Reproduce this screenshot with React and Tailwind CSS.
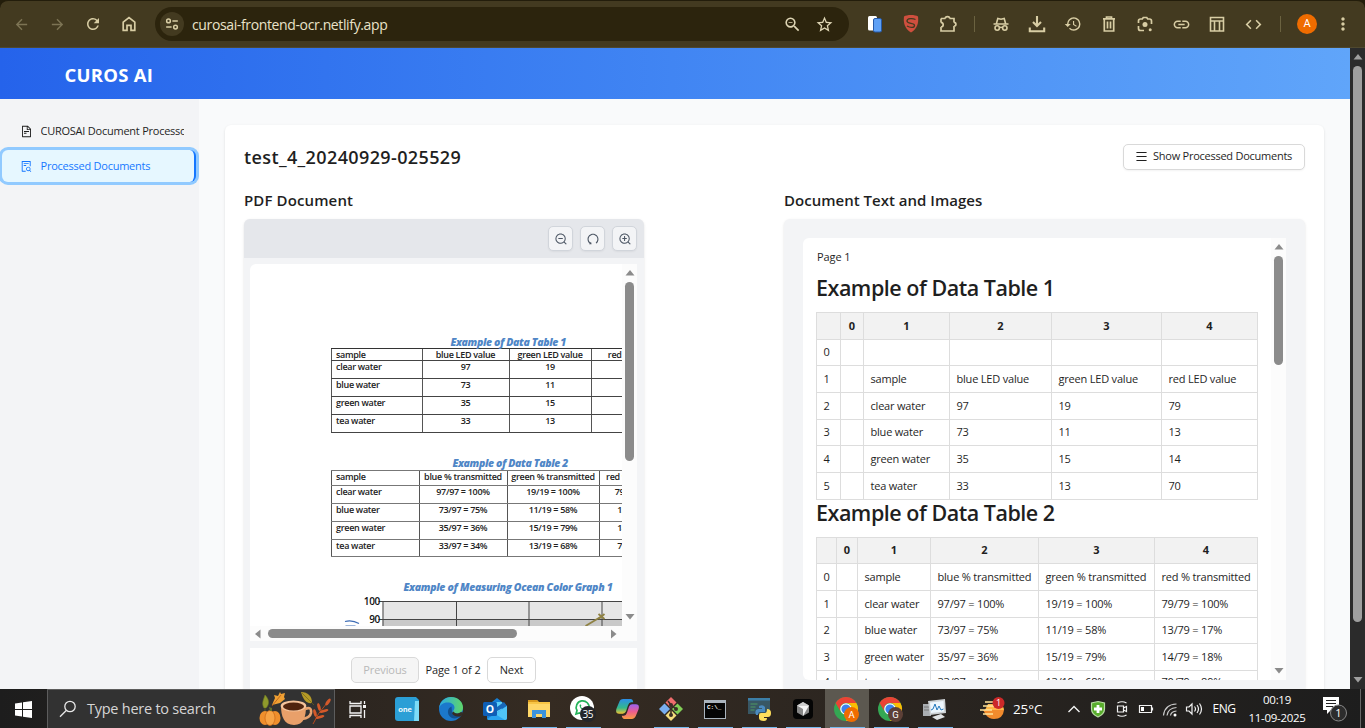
import React from "react";
import {
  MdArrowBack, MdArrowForward, MdRefresh, MdStarBorder, MdOutlineZoomOut,
  MdHistory, MdLink, MdCode, MdMoreVert,
} from "react-icons/md";
import {
  AiOutlineFileText, AiOutlineFileSearch, AiOutlineZoomOut, AiOutlineZoomIn, AiOutlineUndo, AiOutlineMenu,
} from "react-icons/ai";

function Cell({ children }) {
  return <div className="flex h-full w-9 shrink-0 items-center justify-center">{children}</div>;
}

function Divider() {
  return (
    <div className="flex w-[18px] shrink-0 items-center justify-center">
      <div className="h-4 w-px bg-[#6b6240]" />
    </div>
  );
}

function Line({ children, size = 18, w = 1.7 }) {
  return (
    <svg width={size} height={size} viewBox="0 0 18 18" fill="none" stroke="currentColor" strokeWidth={w}>
      {children}
    </svg>
  );
}

function BrowserBar() {
  return (
    <div className="h-12 shrink-0 bg-[#231d0b]">
      <div className="mt-0 flex h-12 items-center rounded-t-lg border-t border-[#231d0b] border-b border-b-[#4f482f] bg-[#433a20] pl-[3px] text-[#d8cda4]">
        <Cell><MdArrowBack size={17} className="text-[#7d7454]" /></Cell>
        <Cell><MdArrowForward size={17} className="text-[#7d7454]" /></Cell>
        <Cell><MdRefresh size={18} /></Cell>
        <Cell>
          <Line size={18}><path d="M3.200 7.200 9 2.600l5.800 4.600V15.400h-3.800V10.400H7v5H3.200z" /></Line>
        </Cell>
        <div className="ml-2 flex h-[34px] w-[694px] shrink-0 items-center rounded-full bg-[#2c240d] pr-[15px] pl-[5px]">
          <div className="flex size-6 items-center justify-center rounded-full bg-[#433a20]">
            <Line size={14} w={1.900}>
              <circle cx="4.500" cy="5" r="2.400" /><path d="M9.500 5H16.500M1.500 13h7" /><circle cx="13.500" cy="13" r="2.400" />
            </Line>
          </div>
          <span className="ml-2 grow font-['Open_Sans','Noto_Sans',sans-serif] text-[14px] tracking-[-0.37px] text-[#e9e2c8]">curosai-frontend-ocr.netlify.app</span>
          <MdOutlineZoomOut size={19} className="mr-[13px] text-[#ded5b4]" />
          <MdStarBorder size={19} className="text-[#ded5b4]" />
        </div>
        <div className="w-2 shrink-0" />
        <Cell>
          <svg width="16" height="18" viewBox="0 0 16 18">
            <rect x="1" y="1" width="9" height="14.500" rx="1.500" fill="#fff" />
            <rect x="6.500" y="3.500" width="8" height="13.500" rx="1.500" fill="#5ea0f5" stroke="#2559a8" />
          </svg>
        </Cell>
        <Cell>
          <svg width="18" height="18" viewBox="0 0 18 18">
            <path d="M9 0c3 0 5.500.5 7 1.500.8 6-.5 12-7 16C2.500 13.500 1.200 7.500 2 1.500 3.500.5 6 0 9 0z" fill="#cf4f3e" />
            <path d="M13.500 4.500c-3-1.400-8.500-1.200-8.500 1.600 0 3.100 7.500 1.600 7.500 4.300 0 2.600-4.500 2.400-7.500.6" fill="none" stroke="#433a20" strokeWidth="1.300" />
          </svg>
        </Cell>
        <Cell>
          <div className="pl-0.5">
            <Line size={18}><path d="M2 3.500h4.500M10.500 3.500H15v4M15 11v5H2v-4M2 7.500v-4M6.300 3.600q0-2 2.200-2t2.200 2M14.900 7.300q2 0 2 1.900t-2 1.900M1.900 7.400q2.300.3 2.300 2.300T1.900 12" /></Line>
          </div>
        </Cell>
        <Divider />
        <Cell>
          <Line size={18} w={1.600}>
            <path d="M1.500 9h15M4.300 9l1.500-5.500 3.200.8 3.200-.8L13.700 9" /><circle cx="5.200" cy="13" r="2.200" /><circle cx="12.800" cy="13" r="2.200" /><path d="M7.400 12.600q1.600-.8 3.200 0" />
          </Line>
        </Cell>
        <Cell><Line size={18} w={2.100}><path d="M9 1v9.500M5 7l4 4 4-4M1.800 12.500v3.700h14.400v-3.700" /></Line></Cell>
        <Cell><MdHistory size={18} /></Cell>
        <Cell><Line size={18} w={1.700}><path d="M3 3.800h12M6.500 3.500V2h5v1.500M4.300 4v12h9.400V4M7.500 6.500v7M10.500 6.500v7" /></Line></Cell>
        <Cell>
          <Line size={18} w={1.700}>
            <path d="M2.500 8V6q0-2 2-2h1.800l1-1.500h3.400l1 1.500h1.800q2 0 2 2v3M2.500 11v2.500q0 2 2 2H8" />
            <circle cx="9" cy="9.500" r="2.500" fill="currentColor" stroke="none" /><circle cx="14.200" cy="14.800" r="1.500" fill="currentColor" stroke="none" />
          </Line>
        </Cell>
        <Cell><MdLink size={19} /></Cell>
        <Cell><Line size={18} w={1.600}><path d="M2.500 2.500h13v13.500h-13zM2.500 6h13M6.500 6v10M11.500 6v10" /></Line></Cell>
        <Cell><MdCode size={19} /></Cell>
        <Divider />
        <Cell>
          <div className="flex size-5 items-center justify-center rounded-full bg-[#ef6c00] font-['Roboto',sans-serif] text-[11px] text-white">A</div>
        </Cell>
        <Cell><MdMoreVert size={20} /></Cell>
      </div>
    </div>
  );
}

function Sidebar() {
  return (
    <aside className="w-[199px] shrink-0 bg-[#f3f4f6] pt-[16px] text-[11px] text-[#1f1f1f]">
      <div className="flex h-8 items-center pl-5">
        <AiOutlineFileText size={13} className="shrink-0" />
        <span className="ml-[7.500px] w-[143px] overflow-hidden tracking-[-0.24px] whitespace-nowrap">CUROSAI Document Processor</span>
      </div>
      <div className="mt-[3px] mr-[3px] ml-[2px] flex h-8 items-center rounded-md border-r-2 border-[#1677ff] bg-[#e6f7ff] pl-[18px] text-[#1677ff] ring-3 ring-[#91caff]">
        <AiOutlineFileSearch size={13} className="shrink-0" />
        <span className="ml-[7.500px] tracking-[-0.24px]">Processed Documents</span>
      </div>
    </aside>
  );
}

function Arrow({ d, light }) {
  return (
    <svg width="10" height="6" viewBox="0 0 10 6" className={light ? "fill-[#9f9f9f]" : "fill-[#8b8b8b]"}>
      <path d={d === "up" ? "M5 0 9.500 5.500H.5z" : "M5 5.500.5 0h9z"} />
    </svg>
  );
}

function PdfRow({ cells, cols, h, dark, last }) {
  const line = dark ? "border-[#444]" : "border-[#777]";
  return (
    <div className={`grid ${cols} ${h} border-b ${line}`}>
      {cells.map((c, i) => (
        <div key={i} className={`overflow-hidden border-l border-[#555] leading-[11px] whitespace-nowrap ${i === 0 ? "pl-[4.500px]" : i === 3 ? "" : "text-center"}`}>
          {i === 3 ? <div className={`${last} text-center`}>{c}</div> : c}
        </div>
      ))}
    </div>
  );
}

function PdfPage() {
  const a = "grid-cols-[91px_87px_82px_100px]";
  const b = "grid-cols-[88px_88px_92px_100px]";
  const title = "text-[10.500px] font-extrabold whitespace-nowrap text-[#4f86c6] italic";
  return (
    <div className="h-[362px] w-[372px] overflow-hidden pt-[72px] pl-[80.500px] text-[9px] font-semibold tracking-[-0.3px] text-[#222]">
      <div className={`flex h-[12px] items-center pt-0.5 pl-[120px] tracking-[-0.38px] ${title}`}>Example of Data Table 1</div>
      <div className="w-[360px] border-t border-[#333]">
        <PdfRow dark cols={a} last="w-[88px]" h="h-[12px]" cells={["sample", "blue LED value", "green LED value", "red LED value"]} />
        <PdfRow dark cols={a} last="w-[88px]" h="h-[18px]" cells={["clear water", "97", "19", ""]} />
        <PdfRow dark cols={a} last="w-[88px]" h="h-[18px]" cells={["blue water", "73", "11", ""]} />
        <PdfRow dark cols={a} last="w-[88px]" h="h-[18px]" cells={["green water", "35", "15", ""]} />
        <PdfRow dark cols={a} last="w-[88px]" h="h-[18px]" cells={["tea water", "33", "13", ""]} />
      </div>
      <div className={`mt-[25px] flex h-[12px] items-center pl-[122px] tracking-[-0.38px] ${title}`}>Example of Data Table 2</div>
      <div className="w-[368px] border-t border-[#777]">
        <PdfRow cols={b} last="w-[87px]" h="h-[15px]" cells={["sample", "blue % transmitted", "green % transmitted", "red % transmitted"]} />
        <PdfRow cols={b} last="w-[84px]" h="h-[18px]" cells={["clear water", "97/97 = 100%", "19/19 = 100%", "79/79 = 100%"]} />
        <PdfRow cols={b} last="w-[84px]" h="h-[18px]" cells={["blue water", "73/97 = 75%", "11/19 = 58%", "13/79 = 17%"]} />
        <PdfRow cols={b} last="w-[84px]" h="h-[18px]" cells={["green water", "35/97 = 36%", "15/19 = 79%", "14/79 = 18%"]} />
        <PdfRow cols={b} last="w-[84px]" h="h-[17px]" cells={["tea water", "33/97 = 34%", "13/19 = 68%", "70/79 = 89%"]} />
      </div>
      <div className={`mt-[24px] flex h-[13px] items-center pl-[73px] tracking-[-0.32px] ${title}`}>Example of Measuring Ocean Color Graph 1</div>
      <svg width="292" height="32" viewBox="330.5 594 292 32" className="font-['Open_Sans',sans-serif]">
        <rect x="382" y="601" width="241" height="18" fill="#e6e6e6" />
        <rect x="382" y="619" width="241" height="8" fill="#c9c9c9" />
        <path d="M378 601.500h245M378 619.500h245M382.500 601v26M456 601v26M528.500 601v26M601.500 601v26" stroke="#444" fill="none" />
        <path d="m585 626 15-9" stroke="#8f8243" strokeWidth="1.800" />
        <path d="m598 614 6 5m0-5-6 5" stroke="#8f8243" strokeWidth="1.800" />
        <path d="M344.500 621.500q7-2 14 2M345 626h10" stroke="#3d6cb5" strokeWidth="1.200" fill="none" />
        <text x="379.500" y="605" textAnchor="end" fontSize="10" fill="#111">100</text>
        <text x="379.500" y="623" textAnchor="end" fontSize="10" fill="#111">90</text>
      </svg>
    </div>
  );
}

function ToolButton({ children }) {
  return <div className="flex size-[25px] items-center justify-center rounded-[5px] border border-[#d1d5db] bg-[#f3f4f6] text-[#4b5563] shadow-xs">{children}</div>;
}

function PdfPanel() {
  return (
    <section className="flex w-[400px] flex-col">
      <h3 className="h-[29px] text-[15px] leading-5 font-semibold tracking-[0.12px]">PDF Document</h3>
      <div className="flex grow flex-col overflow-hidden rounded-t-md bg-[#f3f4f6] shadow-sm">
        <div className="flex h-[39px] shrink-0 items-center justify-end gap-[7px] bg-[#e5e7eb] pr-[7px]">
          <ToolButton><AiOutlineZoomOut size={14} /></ToolButton>
          <ToolButton><AiOutlineUndo size={14} /></ToolButton>
          <ToolButton><AiOutlineZoomIn size={14} /></ToolButton>
        </div>
        <div className="mx-[6px] mt-[6px] w-[387px] shrink-0 overflow-hidden rounded-tl-md bg-white">
          <div className="flex">
            <PdfPage />
            <div className="flex w-[15px] flex-col items-center bg-[#fcfcfc] pt-[6px] pb-[6px]">
              <Arrow d="up" />
              <div className="mt-[6px] h-[179px] w-[9px] rounded-full bg-[#8b8b8b]" />
              <div className="grow" />
              <Arrow d="down" />
            </div>
          </div>
          <div className="flex h-[15px] items-center bg-[#fcfcfc] pl-[5px]">
            <svg width="6" height="10" viewBox="0 0 6 10" className="fill-[#8b8b8b]"><path d="M0 5 5.500.5v9z" /></svg>
            <div className="ml-[7px] h-[9px] w-[249px] rounded-full bg-[#8b8b8b]" />
            <div className="w-[94px]" />
            <svg width="6" height="10" viewBox="0 0 6 10" className="fill-[#8b8b8b]"><path d="M5.500 5 0 .5v9z" /></svg>
          </div>
        </div>
        <div className="mx-[6px] mt-[7px] flex w-[387px] grow items-start bg-white pt-[9px] pl-[101px] text-[11px]">
          <div className="flex h-[26px] w-[68px] items-center justify-center rounded-[5px] border border-[#d9d9d9] bg-[#f5f5f5] tracking-[-0.1px] text-[#b8b8b8]">Previous</div>
          <div className="flex h-[26px] w-[68px] items-center justify-center tracking-[-0.1px] whitespace-nowrap">Page 1 of 2</div>
          <div className="flex h-[26px] w-[49px] items-center justify-center rounded-[5px] border border-[#d9d9d9] tracking-[-0.1px]">Next</div>
        </div>
      </div>
    </section>
  );
}

function DataTable({ cols, rows, heights }) {
  return (
    <div className="w-[442px] border-t border-l border-[#ddd]">
      {rows.map((r, i) => (
        <div key={i} className={`grid ${cols} ${heights[i]}`}>
          {r.map((c, j) => (
            <div
              key={j}
              className={`flex items-center border-r border-b border-[#ddd] whitespace-nowrap ${i === 0 ? "justify-center bg-[#f2f2f2] font-bold" : "pl-[6.500px] tracking-[-0.2px]"}`}
            >
              {c}
            </div>
          ))}
        </div>
      ))}
    </div>
  );
}

const A = "h-[26px]";
const B = "h-[27px]";
const C = "h-[23px]";
const table1 = [
  ["", "0", "1", "2", "3", "4"],
  ["0", "", "", "", "", ""],
  ["1", "", "sample", "blue LED value", "green LED value", "red LED value"],
  ["2", "", "clear water", "97", "19", "79"],
  ["3", "", "blue water", "73", "11", "13"],
  ["4", "", "green water", "35", "15", "14"],
  ["5", "", "tea water", "33", "13", "70"],
];
const table2 = [
  ["", "0", "1", "2", "3", "4"],
  ["0", "", "sample", "blue % transmitted", "green % transmitted", "red % transmitted"],
  ["1", "", "clear water", "97/97 = 100%", "19/19 = 100%", "79/79 = 100%"],
  ["2", "", "blue water", "73/97 = 75%", "11/19 = 58%", "13/79 = 17%"],
  ["3", "", "green water", "35/97 = 36%", "15/19 = 79%", "14/79 = 18%"],
  ["4", "", "tea water", "33/97 = 34%", "13/19 = 68%", "70/79 = 89%"],
];

function TextPanel() {
  return (
    <section className="flex w-[521px] flex-col">
      <h3 className="h-[29px] text-[15px] leading-5 font-semibold tracking-[0.01px]">Document Text and Images</h3>
      <div className="grow rounded-t-md bg-[#f3f4f6] pt-[19px] pl-[19px] shadow-sm">
        <div className="flex h-[442px] w-[483px] overflow-hidden rounded-l-md bg-white">
          <div className="h-[442px] grow overflow-hidden pt-[10px] pl-[13px] text-[11px]">
            <div className="h-[18px] pl-px leading-[18px] tracking-[-0.1px]">Page 1</div>
            <h1 className="mt-[7px] h-[39px] text-[21.500px] leading-[30px] font-semibold tracking-[-0.48px]">Example of Data Table 1</h1>
            <DataTable cols="grid-cols-[24px_23px_86px_102px_110px_96px]" rows={table1} heights={[B, A, B, B, A, B, B]} />
            <h1 className="h-[37px] text-[21.500px] leading-[26px] font-semibold tracking-[-0.48px]">Example of Data Table 2</h1>
            <DataTable cols="grid-cols-[20px_21px_73px_108px_116px_103px]" rows={table2} heights={[A, B, B, A, B, C]} />
          </div>
          <div className="flex w-[15px] shrink-0 flex-col items-center bg-[#fcfcfc] py-[6px]">
            <Arrow d="up" />
            <div className="mt-[6px] h-[109px] w-[9px] rounded-full bg-[#8b8b8b]" />
            <div className="grow" />
            <Arrow d="down" />
          </div>
        </div>
      </div>
    </section>
  );
}

function Page() {
  return (
    <div className="flex h-[641px] shrink-0">
      <div className="flex w-[1350px] shrink-0 flex-col font-['Open_Sans','Noto_Sans',sans-serif] text-[#1f1f1f]">
        <header className="flex h-[51px] shrink-0 items-center bg-linear-to-r from-[#2563eb] to-[#60a5fa] pt-0.5 pl-[64.500px] text-[18.500px] font-bold tracking-[0.250px] text-white">CUROS AI</header>
        <div className="flex grow overflow-hidden">
          <Sidebar />
          <main className="flex grow flex-col bg-[#f9fafb] pt-[26px] pr-[26px] pl-[26px]">
            <div className="flex grow flex-col rounded-t-md bg-white px-[19px] pt-[18px] shadow-sm">
              <div className="flex h-[27px] items-center justify-between">
                <h2 className="pt-0.5 text-[18px] font-semibold tracking-[0.38px]">test_4_20240929-025529</h2>
                <button className="flex h-[26px] w-[182px] items-center rounded-[5px] border border-[#d9d9d9] bg-white pl-[11px] text-[11px] shadow-xs">
                  <AiOutlineMenu size={13} />
                  <span className="ml-[5px] tracking-[-0.25px] whitespace-nowrap">Show Processed Documents</span>
                </button>
              </div>
              <div className="mt-[20px] flex grow justify-between">
                <PdfPanel />
                <TextPanel />
              </div>
            </div>
          </main>
        </div>
      </div>
      <div className="flex w-[15px] flex-col items-center bg-[#2b2b2b] py-[6px]">
        <Arrow d="up" light />
        <div className="mt-[6px] h-[556px] w-[9px] rounded-full bg-[#9f9f9f]" />
        <div className="grow" />
        <Arrow d="down" light />
      </div>
    </div>
  );
}

function Task({ children, open, active }) {
  return (
    <div className={`flex h-full w-11 shrink-0 flex-col items-center ${active ? "bg-[#5c5850]" : ""}`}>
      <div className="flex grow items-center pt-0.5">{children}</div>
      <div className={`h-px w-[35px] ${open ? "bg-[#76b9ed]" : ""}`} />
    </div>
  );
}

function Autumn() {
  return (
    <svg width="74" height="38" viewBox="260 690 74 38" className="ml-auto mr-px">
      <path d="M265 708c-3-5 0-9 1-13 4 4 5 9 1 13zM266 709v3" fill="#8f9a2c" stroke="#6f7a22" strokeWidth=".6" />
      <path d="m273 705 3-7-1-3 4 1 2-4 1 2 4-1-1 4 1 2-5 4-4 1z" fill="#f0a033" />
      <path d="m273 706 9-11" stroke="#b85b14" strokeWidth=".8" />
      <path d="M302 692c7 0 11 4 11 11-6 1-9-4-11-11z" fill="#b59a26" /><path d="m303 693 12 12" stroke="#71641b" strokeWidth=".7" />
      <g fill="#ef8f2c"><ellipse cx="266" cy="718" rx="5.500" ry="7" /><ellipse cx="276" cy="718" rx="5.500" ry="7" /><ellipse cx="271" cy="718" rx="5" ry="7.500" fill="#f7a344" stroke="#c96516" strokeWidth=".7" /></g>
      <path d="m271 711-1-4 3 1v3z" fill="#63702a" />
      <path d="M306 709q7-3 6 4-1 5-9 6" fill="none" stroke="#e8a36f" strokeWidth="2.600" />
      <path d="M282 706c0 10 3 19 13 19s12-9 12-19z" fill="#e9a06a" /><ellipse cx="294.500" cy="706" rx="12.800" ry="5.500" fill="#f5c39b" /><ellipse cx="294.500" cy="706.500" rx="10.500" ry="4" fill="#50240f" />
      <path d="M314 724q4-10 14-21" stroke="#b84a1e" fill="none" />
      <g fill="#d4592a"><ellipse cx="329" cy="702" rx="1.600" ry="4" transform="rotate(35 329 702)" /><ellipse cx="320" cy="707" rx="1.500" ry="4" transform="rotate(-15 320 707)" /><ellipse cx="325" cy="711" rx="1.400" ry="4.500" transform="rotate(75 325 711)" /><ellipse cx="316" cy="713" rx="1.500" ry="4" transform="rotate(-15 316 713)" /><ellipse cx="321" cy="717" rx="1.400" ry="4.500" transform="rotate(75 321 717)" /></g>
    </svg>
  );
}

function Chrome({ letter, color }) {
  return (
    <svg width="26" height="25" viewBox="0 0 26 25" className="font-['Roboto',sans-serif]">
      <circle cx="12" cy="12" r="12" fill="#34a853" />
      <path d="M1.600 6A12 12 0 0 1 22.400 6H12A6 6 0 0 0 6.800 15z" fill="#ea4335" />
      <path d="M22.400 6A12 12 0 0 1 12 24l5.200-9A6 6 0 0 0 12 6z" fill="#fbbc04" />
      <circle cx="12" cy="12" r="5.800" fill="#fff" /><circle cx="12" cy="12" r="4.600" fill="#3b82f0" />
      <circle cx="17.500" cy="17.500" r="7.500" fill={color} />
      <text x="17.500" y="21" fontSize="9.500" fill="#fff" textAnchor="middle">{letter}</text>
    </svg>
  );
}

function TrayIcon({ children }) {
  return (
    <div className="flex w-6 shrink-0 items-center justify-center">
      <svg width="18" height="18" viewBox="0 0 18 18" fill="none" stroke="#f2f2f2" strokeWidth="1.200">{children}</svg>
    </div>
  );
}

function Taskbar() {
  return (
    <div className="flex h-[39px] shrink-0 items-stretch bg-linear-to-r from-[#1d1d1d] via-[#352b22] via-40% to-[#1d1d1d] font-['Open_Sans','Noto_Sans',sans-serif] text-white">
      <div className="flex w-[47px] shrink-0 items-center justify-center pt-0.5">
        <svg width="17" height="17" viewBox="0 0 17 17" fill="#fff"><path d="m0 2.500 7-1V8H0zM8 1.300 17 0v8H8zM0 9h7v6.500l-7-1zM8 9h9v8l-9-1.300z" /></svg>
      </div>
      <div className="flex w-[288px] shrink-0 items-center border border-b-0 border-[#5d5d5d] bg-[#323232] pl-[11px]">
        <svg width="18" height="18" viewBox="0 0 18 18" fill="none" stroke="#e8e8e8" strokeWidth="1.300"><circle cx="11" cy="6.500" r="5.200" /><path d="M7.200 10.500 1 16.800" /></svg>
        <span className="ml-[10px] text-[14.500px] tracking-[-0.25px] whitespace-nowrap text-[#d6d6d6]">Type here to search</span>
        <Autumn />
      </div>
      <div className="flex w-[50px] shrink-0 items-center justify-center pt-0.5 pr-1 pl-0">
        <svg width="18" height="17" viewBox="0 0 18 17" fill="none" stroke="#f4f4f4" strokeWidth="1.300"><path d="M1 0v2.500h11V0M1 17v-2.500h11V17M1 5h11v7H1zM15.500 0v3M15.500 9v8" /><rect x="14" y="4" width="3" height="3" fill="#f4f4f4" stroke="none" /></svg>
      </div>
      <Task>
        <svg width="24" height="24" viewBox="0 0 24 24" className="font-['Lato',sans-serif]"><path d="M3 0h18l3 3v21H3q-3 0-3-3V3q0-3 3-3z" fill="#2b9fd6" /><path d="M20 4h4v20h-5z" fill="#7cdcf7" /><text x="10" y="14.500" fontSize="8" fontWeight="bold" textAnchor="middle" fill="#fff">one</text></svg>
      </Task>
      <Task>
        <svg width="24" height="24" viewBox="0 0 24 24">
          <defs><linearGradient id="eg"><stop stopColor="#2aa9e6" /><stop offset="1" stopColor="#5fd668" /></linearGradient></defs>
          <circle cx="12" cy="12" r="12" fill="#1b78cc" />
          <path d="M0 11.500C1 4 6 0 12 0c7 0 12 5 12 10.500 0 4-3 6-6 6-2.500 0-4-1-4-2s1.500-1.500 1.500-4c0-3-3-5-7-5C4 5.500 1 8 0 11.500z" fill="url(#eg)" />
          <path d="M12.500 9.500C9 11 8 15 10 18.500c2.500 3.500 7 4 11.500.800l1-1.500C18 19.500 14 18 13 15z" fill="#12508f" />
          <path d="M14.500 14.500c1.500 2.500 5 2.500 7.500.5l2.500 1-2.500 3c-4 1.500-8 0-9-3z" fill="#352c24" />
        </svg>
      </Task>
      <Task>
        <svg width="25" height="24" viewBox="0 0 25 24" className="font-['Open_Sans',sans-serif]"><path d="m4 9 10-8 10 8v13H4z" fill="#1680d6" /><path d="M7 5h12v12H7z" fill="#5ccdf7" /><path d="m14 14 10-5-3-4-7 5z" fill="#1767b8" /><path d="m4 22 20-13v12q0 2-2 2H5z" fill="#2aa3ee" /><path d="m24 9-12 8 10 6q2 0 2-2z" fill="#50c4f6" /><rect x="0" y="5" width="14" height="14" rx="1.500" fill="#0f5eb5" /><text x="7" y="15.800" fontSize="10.500" fontWeight="bold" textAnchor="middle" fill="#fff">O</text></svg>
      </Task>
      <Task open>
        <svg width="22" height="20" viewBox="0 0 22 20"><path d="M0 1h9l2 2h11v15H0z" fill="#f8c545" /><path d="M0 1h9l1 2H0z" fill="#d99a1e" /><path d="M0 5h22v13H0z" fill="#ffd768" /><path d="M4 19v-8h14v8h-4v-4H8v4z" fill="#3d93db" /></svg>
      </Task>
      <Task open>
        <svg width="26" height="26" viewBox="0 0 26 26" className="font-['Open_Sans',sans-serif]"><circle cx="12" cy="12" r="12" fill="#fff" /><path d="m6 18 1-3.500A6.500 6.500 0 1 1 9.500 17z" fill="none" stroke="#25b35a" strokeWidth="1.700" /><path d="M9.500 9q0 4 5 5.500l1-1.500-2-1-1 .8-1.700-2 .6-1-.8-1.500z" fill="#25b35a" /><circle cx="18" cy="18" r="8" fill="#24262a" /><text x="17.700" y="21.800" fontSize="10" textAnchor="middle" fill="#fff" letterSpacing="-.6">35</text></svg>
      </Task>
      <Task>
        <svg width="23" height="22" viewBox="0 0 22 21">
          <defs><linearGradient id="ca" x2="0" y2="1"><stop stopColor="#2c8ee8" /><stop offset=".6" stopColor="#33b98b" /><stop offset="1" stopColor="#f1c232" /></linearGradient><linearGradient id="cb" x2="0" y2="1"><stop stopColor="#9b62f0" /><stop offset=".5" stopColor="#ec5c8f" /><stop offset="1" stopColor="#f99b43" /></linearGradient></defs>
          <path d="M7 1h7q2 0 2.500 3h-2q-2 0-3 3L9.500 13q-1 2-3 2H3q-4 0-2.500-5L3 4q1-3 4-3z" fill="url(#ca)" /><path d="M15 20H8q-2 0-2.500-3h2q2 0 3-3L12.500 8q1-2 3-2H19q4 0 2.500 5L19 17q-1 3-4 3z" fill="url(#cb)" />
        </svg>
      </Task>
      <Task open>
        <svg width="24" height="24" viewBox="0 0 24 24"><path d="m12 0 5.500 5.500L12 11 6.500 5.500z" fill="#ef6d6d" /><path d="m5.500 6.500L11 12l-5.500 5.500L0 12z" fill="#79aef0" /><path d="m18.500 6.500L24 12l-5.500 5.500L13 12z" fill="#82cf56" /><path d="m12 13 5.500 5.500L12 24l-5.500-5.500z" fill="#f5dc7b" /><path d="m9 4 3 4v10M12 8l5 4" stroke="#3b2d26" strokeWidth="1.600" fill="none" /><g fill="#3b2d26"><circle cx="12" cy="8" r="2" /><circle cx="17" cy="12" r="2" /><circle cx="12" cy="18" r="2" /></g></svg>
      </Task>
      <Task open>
        <svg width="22" height="19" viewBox="0 0 22 19" className="font-['Liberation_Mono',monospace]"><path d="M0 0h22v19H0z" fill="#aab4bd" /><path d="M1 3h20v15H1z" fill="#050505" /><text x="3" y="9" fontSize="6" fontWeight="bold" fill="#fff">C:\_</text></svg>
      </Task>
      <Task open>
        <svg width="23" height="23" viewBox="0 0 23 23"><path d="M0 0h22v16H0z" fill="#385764" /><path d="M0 0h22v2.500H0z" fill="#3c7fa8" /><path d="M2.500 6h7M2.500 9h5M2.500 12h4" stroke="#4f9b62" /><path d="M11 8q4-2 6 1v5h-5q-2 0-2 3H8q-2-5 2-6h4v-1h-3z" fill="#4b8bbf" /><path d="M19 11q4 0 4 4t-3 4h-4v1h3q0 3-3 3-5 0-5-3v-3q0-2 2-2h4q2 0 2-4z" fill="#ffdf5c" /></svg>
      </Task>
      <Task open>
        <svg width="20" height="20" viewBox="0 0 20 20"><rect width="20" height="20" rx="4" fill="#050505" /><path d="m10 3 6 3.500v7L10 17l-6-3.500v-7z" fill="#888" /><path d="m4 6.500 6-3.500 6 3.500z" fill="#ccc" /><path d="m4 6.500 12 0-6 10.500V10z" fill="#f4f4f4" /></svg>
      </Task>
      <Task open active><Chrome letter="A" color="#ef6c00" /></Task>
      <Task open><Chrome letter="G" color="#5d4037" /></Task>
      <Task open>
        <svg width="24" height="22" viewBox="0 0 24 22"><path d="M0 6h8v12H0z" fill="#a9adb1" /><path d="M1 9h5M1 12h5" stroke="#777" /><path d="m5 3 17-2 1 14-16 2z" fill="#cdd1d4" /><path d="m7 4.500 13.500-1.500.700 10.500L8 15z" fill="#edf6fd" /><path d="m8 12 2-1 2-5 2 6 2-4 2 4 2.500-1" stroke="#2378bd" fill="none" /><path d="m9 19 9-3 4 3-8 3z" fill="#e2e4e6" /></svg>
      </Task>
      <div className="flex w-[48px] shrink-0 items-center justify-end pr-0">
        <svg width="25" height="23" viewBox="0 0 25 23" className="font-['Open_Sans',sans-serif]"><path d="M3 13h21q-1 9-10 9-5 0-8-4z" fill="#f28b2d" /><path d="M8 7h12q4 2 4 6H5z" fill="#ffb84a" /><path d="M5 5h9M3 9h11M0 13h12M3 17h10" stroke="#ffe39a" strokeWidth="1.700" /><circle cx="18.500" cy="6" r="6" fill="#cc2929" /><text x="18.500" y="9.300" fontSize="9" textAnchor="middle" fill="#fff">1</text></svg>
      </div>
      <div className="flex w-[57px] shrink-0 items-center justify-start pt-px pl-[8px] text-[13.500px] tracking-[-0.1px]">25°C</div>
      <TrayIcon><path d="m3.500 12 5.500-5.500 5.500 5.500" strokeWidth="1.400" /></TrayIcon>
      <TrayIcon><path d="M9 1.500 15.500 3v6q0 5-6.500 8-6.500-3-6.500-8V3z" fill="#59ad2c" stroke="#b9dca4" /><path d="M9 5v8M5 9h8" stroke="#fff" strokeWidth="2.800" /></TrayIcon>
      <TrayIcon><path d="M4.500 3q4.500-2.500 9 0M4.500 15q4.500 2.500 9 0M4.500 6h6v6h-6zM10.500 8l3-1.500v5l-3-1.500" /></TrayIcon>
      <TrayIcon><path d="M2.500 5.500h12v7h-12zM15.500 7.500v3" /><path d="M4 7h3v4H4z" fill="#fff" stroke="none" /></TrayIcon>
      <TrayIcon><path d="M2.500 15.500q1-11 13-11.500M6 15.500q1-7.500 9.500-8M9.500 15.500q.5-4 6-4.500" stroke="#ccc" /><circle cx="14" cy="15" r="1.500" fill="#fff" stroke="none" /></TrayIcon>
      <TrayIcon><path d="M1.500 7h2.500l3-3v10l-3-3H1.500zM9.500 6.500q2 2.500 0 5M12 5q3 4 0 8M14.500 3.500q4 5.500 0 11" /></TrayIcon>
      <div className="flex w-9 shrink-0 items-center justify-center text-[12px] tracking-[-0.45px]">ENG</div>
      <div className="flex w-[70px] shrink-0 flex-col items-center justify-center text-[11.500px] leading-[18px] tracking-[-0.3px] whitespace-nowrap"><span>00:19</span><span>11-09-2025</span></div>
      <div className="flex w-[36px] shrink-0 items-center justify-end">
        <svg width="26" height="26" viewBox="0 0 26 26" className="font-['Open_Sans',sans-serif]"><path d="M1 1h16v13H9l-4 4v-4H1z" fill="#fff" /><path d="M4 4.500h10M4 7.500h10M4 10.500h7" stroke="#222" /><circle cx="16.500" cy="17" r="8" fill="#2c2c2c" stroke="#888" /><text x="16.500" y="21" fontSize="11" textAnchor="middle" fill="#fff">1</text></svg>
      </div>
      <div className="ml-[12px] w-px bg-[#666]" />
    </div>
  );
}

export default function App() {
  return (
    <div className="flex h-[728px] w-[1365px] flex-col overflow-hidden bg-white">
      <BrowserBar />
      <Page />
      <Taskbar />
    </div>
  );
}
